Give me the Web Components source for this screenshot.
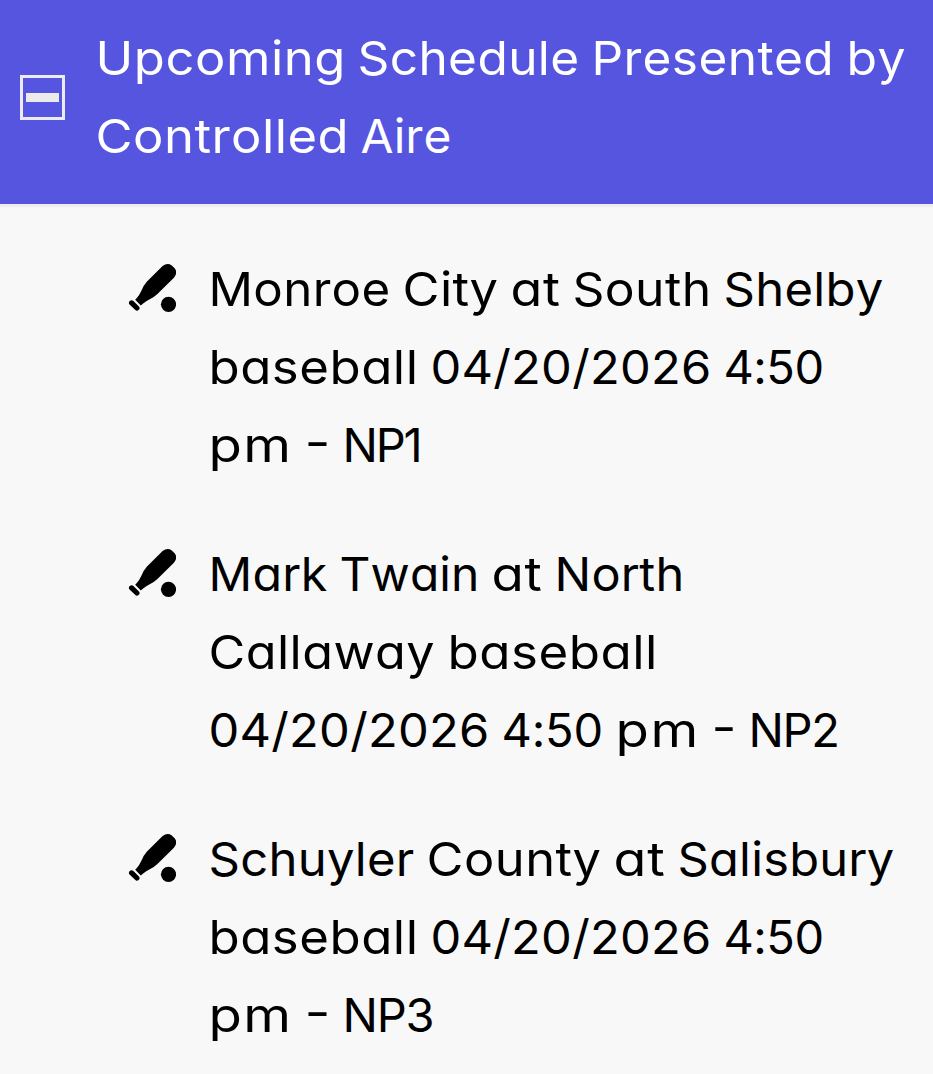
<!DOCTYPE html>
<html lang="en">
<head>
<meta charset="utf-8">
<title>Upcoming Schedule</title>
<style>
html,body{margin:0;height:100%;background:#f8f8f8;overflow:hidden}
body{font-family:Inter,"Open Sans",sans-serif}
</style>
</head>
<body>
<schedule-panel>
  <panel-header slot="header">
    <text-line stops="94.5 357 591 845.5 905">Upcoming Schedule Presented by</text-line>
    <text-line stops="94.5 360 451">Controlled Aire</text-line>
  </panel-header>
  <game-item>
    <text-line stops="208 402 510 572 723 883">Monroe City at South Shelby</text-line>
    <text-line stops="208 430 723 823">baseball 04/20/2026 4:50</text-line>
    <text-line stops="208 304 342 420">pm - NP1</text-line>
  </game-item>
  <game-item>
    <text-line stops="208 339 491 554 684">Mark Twain at North</text-line>
    <text-line stops="208 446.5 657">Callaway baseball</text-line>
    <text-line stops="208 501 614.5 711 748 838">04/20/2026 4:50 pm - NP2</text-line>
  </game-item>
  <game-item>
    <text-line stops="208 426 613 677 894">Schuyler County at Salisbury</text-line>
    <text-line stops="208 430 723 823">baseball 04/20/2026 4:50</text-line>
    <text-line stops="208 304 342 433">pm - NP3</text-line>
  </game-item>
</schedule-panel>
<script>
class TextLine extends HTMLElement {
  connectedCallback() {
    const root = this.attachShadow({mode: 'open'});
    root.innerHTML = `<style>
      :host{display:block;height:78px;line-height:78px;white-space:pre;
        font-size:47px;font-weight:380;font-kerning:none;
        font-feature-settings:"cv11" 1,"ss03" 1,"calt" 0}
      .word{display:inline-block;transform-origin:0 50%}
    </style>`;
    const words = this.textContent.trim().split(' ');
    const stops = this.getAttribute('stops').split(' ').map(Number);
    const gap = 12;
    words.forEach((word, i) => {
      const span = document.createElement('span');
      span.className = 'word';
      span.textContent = word;
      root.append(span);
      const last = i === words.length - 1;
      const room = stops[i + 1] - stops[i] - (last ? 0 : gap);
      const natural = span.getBoundingClientRect().width;
      // Wider words take most of their extra room as glyph width, the rest as tracking.
      const ratio = room / natural;
      const dash = word === '-';
      const scale = dash ? ratio : ratio > 1 ? Math.min(1 + (ratio - 1) * 0.8, 1.16) : 1;
      span.style.letterSpacing = (room / scale - natural) / word.length + 'px';
      span.style.width = room + 'px';
      span.style.transform = `translate(.5px,${dash ? -3.5 : 0}px) scaleX(${scale})`;
      if (!last) {
        const space = document.createElement('span');
        space.textContent = ' ';
        root.append(space);
        space.style.letterSpacing = gap - space.getBoundingClientRect().width + 'px';
      }
    });
  }
}
class CollapseToggle extends HTMLElement {
  constructor() {
    super();
    this.attachShadow({mode: 'open'}).innerHTML = `<style>
      :host{display:flex;box-sizing:border-box;width:45px;height:45px;border:3px solid #ebebf0;
        align-items:center;justify-content:center}
      i{width:33px;height:9px;background:#ebebeb}
    </style><i></i>`;
  }
}
class PanelHeader extends HTMLElement {
  constructor() {
    super();
    this.attachShadow({mode: 'open'}).innerHTML = `<style>
      :host{display:flex;box-sizing:border-box;height:207px;padding:19px 0 29px 20px;gap:29.5px;
        align-items:center;color:#fff;background:#5655e0;border-bottom:3px solid #efebee}
      collapse-toggle{flex:none}
    </style><collapse-toggle></collapse-toggle><div><slot></slot></div>`;
  }
}
class BaseballIcon extends HTMLElement {
  constructor() {
    super();
    this.attachShadow({mode: 'open'}).innerHTML = `<style>
      :host{display:block;width:48px;height:50px}
      svg{display:block}
    </style>
    <svg width="48" height="50" viewBox="0 0 48 50">
      <path d="M34.6 2Q39.3-1.6 43.8 1.4L46.9 4.5Q50 9 45.9 13.7L29.4 30Q26.2 33 22.2 35Q17.8 37.2 14.8 39.7L12.8 41.4L7.2 35.8L9 33.8Q11.5 30.7 13.5 26.4Q15.6 21.4 19 17.6Z"/>
      <path d="M3.6 38.9L8.9 44" stroke="#000" stroke-width="5.2" stroke-linecap="round"/>
      <circle cx="40.5" cy="40.3" r="7.6"/>
    </svg>`;
  }
}
class GameItem extends HTMLElement {
  constructor() {
    super();
    this.attachShadow({mode: 'open'}).innerHTML = `<style>
      :host{display:flex;gap:32px;align-items:flex-start;color:#000}
      baseball-icon{flex:none;margin-top:14px}
    </style><baseball-icon></baseball-icon><div><slot></slot></div>`;
  }
}
class SchedulePanel extends HTMLElement {
  constructor() {
    super();
    this.attachShadow({mode: 'open'}).innerHTML = `<style>
      :host{display:block;width:933px;min-height:1074px;background:#f8f8f8}
      main{display:flex;flex-direction:column;gap:51px;padding:43px 0 0 128px}
    </style><slot name="header"></slot><main><slot></slot></main>`;
  }
}
customElements.define('collapse-toggle', CollapseToggle);
customElements.define('baseball-icon', BaseballIcon);
customElements.define('panel-header', PanelHeader);
customElements.define('game-item', GameItem);
customElements.define('schedule-panel', SchedulePanel);
customElements.define('text-line', TextLine);
</script>
</body>
</html>
